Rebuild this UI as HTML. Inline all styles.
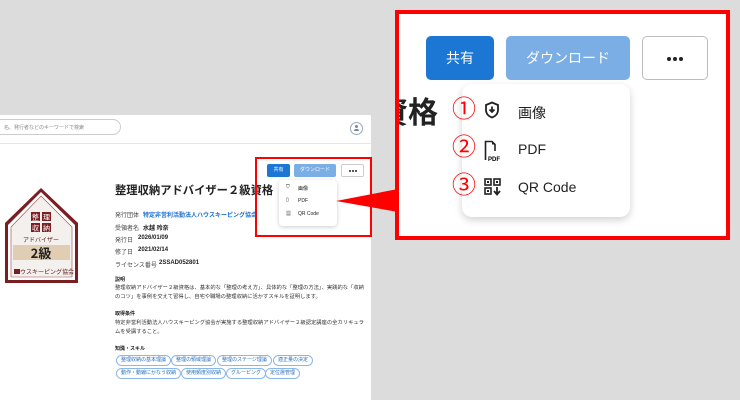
<!DOCTYPE html>
<html><head><meta charset="utf-8"><style>
*{margin:0;padding:0;box-sizing:border-box}
body{width:740px;height:400px;background:#dcdcdc;position:relative;overflow:hidden;font-family:"Liberation Sans","Noto Sans CJK JP",sans-serif;color:#222}
.a{position:absolute}
.card{left:0;top:115px;width:371px;height:285px;background:#fff}
.t6{font-size:6px;white-space:nowrap}
.tag{position:absolute;height:11px;border:1px solid #8ab8e8;border-radius:6px;font-size:5px;color:#2a6ec0;line-height:9px;padding:0 4px;white-space:nowrap}
</style></head><body>
<div class="a card"></div>
<div class="a" style="left:-20px;top:119px;width:141px;height:16px;border:1px solid #ccc;border-radius:8px;background:#fff"></div>
<div class="a t6" style="left:4px;top:124px;font-size:5px;color:#888">名、発行者などのキーワードで検索</div>
<div class="a" style="left:350px;top:122px;width:13px;height:13px;border:1px solid #9ab;border-radius:50%"></div>
<div class="a" style="left:355px;top:125px;width:3px;height:3px;border-radius:50%;background:#789"></div>
<div class="a" style="left:354px;top:129px;width:5px;height:2px;border-radius:2px 2px 0 0;background:#789"></div>
<div class="a" style="left:0;top:143px;width:371px;height:1px;background:#e6e6e6"></div>

<svg class="a" style="left:0;top:185px" width="82" height="100" viewBox="0 0 82 100">
<polygon points="41,3 78,38 78,98 5,98 5,38" fill="#7a1e22"/>
<polygon points="41,7 75,40 75,95 8,95 8,40" fill="#fff"/>
<polygon points="41,11 72,42 72,92 11,92 11,42" fill="#f4f0ee" stroke="#9a4a4a" stroke-width="0.6"/>
<rect x="31" y="27" width="9" height="9" fill="#7a1e22"/><rect x="42" y="27" width="9" height="9" fill="#7a1e22"/>
<rect x="31" y="38" width="9" height="9" fill="#7a1e22"/><rect x="42" y="38" width="9" height="9" fill="#7a1e22"/>
<text x="35.5" y="34.5" font-size="7" fill="#fff" text-anchor="middle" font-family="Noto Sans CJK JP">整</text>
<text x="46.5" y="34.5" font-size="7" fill="#fff" text-anchor="middle" font-family="Noto Sans CJK JP">理</text>
<text x="35.5" y="45.5" font-size="7" fill="#fff" text-anchor="middle" font-family="Noto Sans CJK JP">収</text>
<text x="46.5" y="45.5" font-size="7" fill="#fff" text-anchor="middle" font-family="Noto Sans CJK JP">納</text>
<text x="41" y="57" font-size="6" fill="#5a2020" text-anchor="middle" font-family="Noto Sans CJK JP">アドバイザー</text>
<rect x="13" y="60" width="57" height="15" fill="#e0cdb4"/>
<text x="41" y="73" font-size="13" font-weight="bold" fill="#222" text-anchor="middle" font-family="Noto Sans CJK JP">2級</text>
<text x="44" y="89" font-size="6" fill="#5a2020" text-anchor="middle" font-family="Noto Sans CJK JP">ハウスキーピング協会</text>
<rect x="14" y="84" width="6" height="5" fill="#7a1e22"/>
</svg>

<div class="a" style="left:115px;top:182px;font-size:11.3px;font-weight:bold;white-space:nowrap">整理収納アドバイザー２級資格</div>
<div class="a t6" style="left:115px;top:210px;color:#444">発行団体</div><div class="a t6" style="left:143px;top:210px;color:#1a6fd0;font-weight:bold">特定非営利活動法人ハウスキーピング協会</div>
<div class="a t6" style="left:115px;top:223px;color:#444">受領者名</div><div class="a t6" style="left:143px;top:223px;font-weight:bold">水越 玲奈</div>
<div class="a t6" style="left:115px;top:235px;color:#444">発行日</div><div class="a t6" style="left:138px;top:235px;font-weight:bold">2026/01/09</div>
<div class="a t6" style="left:115px;top:247px;color:#444">修了日</div><div class="a t6" style="left:138px;top:247px;font-weight:bold">2021/02/14</div>
<div class="a t6" style="left:115px;top:260px;color:#444">ライセンス番号</div><div class="a t6" style="left:159px;top:260px;font-weight:bold">2SSAD052801</div>
<div class="a t6" style="left:115px;top:276px;font-weight:bold;font-size:5px">説明</div>
<div class="a" style="left:115px;top:284px;width:250px;font-size:5.3px;line-height:9px;color:#333">整理収納アドバイザー２級資格は、基本的な「整理の考え方」、具体的な「整理の方法」、実践的な「収納のコツ」を事例を交えて習得し、自宅や職場の整理収納に活かすスキルを証明します。</div>
<div class="a t6" style="left:115px;top:310px;font-weight:bold;font-size:5px">取得条件</div>
<div class="a" style="left:115px;top:319px;width:250px;font-size:5.3px;line-height:9px;color:#333">特定非営利活動法人ハウスキーピング協会が実施する整理収納アドバイザー２級認定講座の全カリキュラムを受講すること。</div>
<div class="a t6" style="left:115px;top:345px;font-weight:bold;font-size:5px">知識・スキル</div>
<div class="tag" style="left:116px;top:355px">整理収納の基本理論</div>
<div class="tag" style="left:171px;top:355px">整理の領域理論</div>
<div class="tag" style="left:217px;top:355px">整理のステージ理論</div>
<div class="tag" style="left:273px;top:355px">適正量の決定</div>
<div class="tag" style="left:116px;top:368px">動作・動線にかなう収納</div>
<div class="tag" style="left:181px;top:368px">使用頻度別収納</div>
<div class="tag" style="left:226px;top:368px">グルーピング</div>
<div class="tag" style="left:265px;top:368px">定位置管理</div>

<!-- small buttons -->
<div class="a" style="left:267px;top:164px;width:23px;height:13px;background:#1b76d4;border-radius:2px;color:#fff;font-size:5px;text-align:center;line-height:13px">共有</div>
<div class="a" style="left:294px;top:164px;width:42px;height:13px;background:#7aaee4;border-radius:2px;color:#fff;font-size:5px;text-align:center;line-height:13px">ダウンロード</div>
<div class="a" style="left:341px;top:164px;width:23px;height:13px;border:1px solid #ccc;border-radius:2px"></div>
<div class="a" style="left:349px;top:170px;width:2px;height:2px;border-radius:50%;background:#222;box-shadow:3px 0 #222,6px 0 #222"></div>
<div class="a" style="left:279px;top:180px;width:58px;height:46px;background:#fff;border-radius:4px;box-shadow:0 1px 4px rgba(0,0,0,.2)"></div>
<div class="a t6" style="left:286px;top:184px;font-size:5px">⛉</div><div class="a t6" style="left:298px;top:185px;font-size:5px">画像</div>
<div class="a t6" style="left:286px;top:197px;font-size:5px">▯</div><div class="a t6" style="left:298px;top:198px;font-size:5px">PDF</div>
<div class="a t6" style="left:286px;top:210px;font-size:5px">▦</div><div class="a t6" style="left:298px;top:211px;font-size:5px">QR Code</div>
<div class="a" style="left:255px;top:157px;width:117px;height:80px;border:2px solid #f00"></div>
<svg class="a" style="left:330px;top:180px" width="70" height="40"><polygon points="6,21 68,9 68,32" fill="#f00"/></svg>

<!-- big callout -->
<div class="a" style="left:395px;top:10px;width:335px;height:230px;background:#fff;border:4px solid #f00"></div>
<div class="a" style="left:378px;top:88px;font-size:30px;font-weight:bold;white-space:nowrap;clip-path:inset(0 0 0 21px)">資格</div>
<div class="a" style="left:426px;top:36px;width:68px;height:44px;background:#1b76d4;border-radius:5px;color:#fff;font-size:14px;text-align:center;line-height:44px">共有</div>
<div class="a" style="left:506px;top:36px;width:124px;height:44px;background:#7aaee4;border-radius:5px;color:#fff;font-size:14px;text-align:center;line-height:44px">ダウンロード</div>
<div class="a" style="left:642px;top:36px;width:66px;height:44px;border:1px solid #bbb;border-radius:5px;background:#fff"></div>
<div class="a" style="left:667px;top:57px;width:4px;height:4px;border-radius:50%;background:#222;box-shadow:6px 0 #222,12px 0 #222"></div>
<div class="a" style="left:462px;top:84px;width:168px;height:133px;background:#fff;border-radius:10px;box-shadow:0 3px 8px rgba(0,0,0,.18)"></div>
<div class="a" style="left:452px;top:96px;font-size:24px;color:#f00;line-height:28px">①</div>
<div class="a" style="left:452px;top:134px;font-size:24px;color:#f00;line-height:28px">②</div>
<div class="a" style="left:452px;top:172px;font-size:24px;color:#f00;line-height:28px">③</div>
<svg class="a" style="left:484px;top:101px" width="16" height="18" viewBox="0 0 16 18"><path d="M8 1.5 L14 4 V9 C14 13 11 15.5 8 16.5 C5 15.5 2 13 2 9 V4 Z" fill="none" stroke="#222" stroke-width="1.8"/><path d="M8 5.5 V10.5 M5.5 8.5 L8 11 L10.5 8.5" stroke="#222" stroke-width="1.8" fill="none"/></svg>
<svg class="a" style="left:484px;top:140px" width="20" height="22" viewBox="0 0 20 22"><path d="M1.5 20 V1.5 H8 L11 4.5 V11" fill="none" stroke="#222" stroke-width="1.6"/><path d="M8 1.5 V4.5 H11" fill="#222"/><text x="4" y="21" font-size="6" font-weight="bold" font-family="Liberation Sans">PDF</text></svg>
<svg class="a" style="left:484px;top:178px" width="18" height="18" viewBox="0 0 18 18"><rect x="1" y="1" width="6" height="6" fill="none" stroke="#222" stroke-width="1.6"/><rect x="10" y="1" width="6" height="6" fill="none" stroke="#222" stroke-width="1.6"/><rect x="1" y="10" width="6" height="6" fill="none" stroke="#222" stroke-width="1.6"/><rect x="3" y="3" width="2" height="2" fill="#222"/><rect x="12" y="3" width="2" height="2" fill="#222"/><rect x="3" y="12" width="2" height="2" fill="#222"/><path d="M13 9 V16 M10 13 L13 16.5 L16 13" stroke="#222" stroke-width="1.8" fill="none"/></svg>
<div class="a" style="left:518px;top:103px;font-size:14px;color:#222">画像</div>
<div class="a" style="left:518px;top:141px;font-size:14px;color:#222">PDF</div>
<div class="a" style="left:518px;top:179px;font-size:14px;color:#222">QR Code</div>
</body></html>
